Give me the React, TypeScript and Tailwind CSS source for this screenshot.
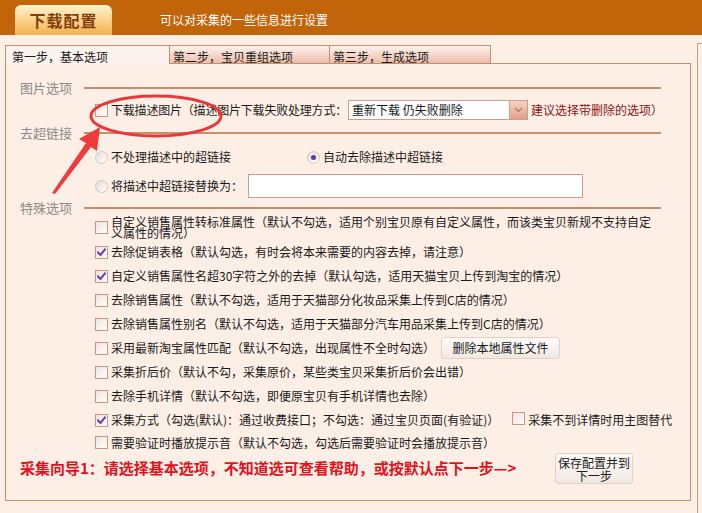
import React from "react";

function Checkbox({ checked = false }: { checked?: boolean }) {
  return (
    <span className="relative inline-flex items-center justify-center w-[13px] h-[13px] shrink-0 border border-[#c9977e] bg-gradient-to-br from-[#efe2de] to-white">
      {checked && (
        <svg width="9" height="9" viewBox="0 0 9 9" fill="none">
          <path d="M1 4.5 L3.5 7 L8 1.5" stroke="#6a3fa2" strokeWidth="2" strokeLinecap="square" />
        </svg>
      )}
    </span>
  );
}

function Radio({ checked = false }: { checked?: boolean }) {
  return (
    <span className="inline-flex items-center justify-center w-[13px] h-[13px] shrink-0 rounded-full border border-[#d3c6c0] bg-gradient-to-br from-[#e6ddd9] to-white">
      {checked && <span className="w-[5px] h-[5px] rounded-full bg-[#5b3aa3]" />}
    </span>
  );
}

function SectionLabel({ text, className = "" }: { text: string; className?: string }) {
  return (
    <div className={`flex items-center h-[16px] ${className}`}>
      <span className="text-[13px] leading-[16px] text-[#8a8a8a] whitespace-nowrap">{text}</span>
      <div className="flex-1 h-[2px] ml-[12px] bg-[#c4906e]" />
    </div>
  );
}

interface Opt {
  text: string;
  checked?: boolean;
}

const options: Opt[] = [
  { text: "去除促销表格（默认勾选，有时会将本来需要的内容去掉，请注意）", checked: true },
  { text: "自定义销售属性名超30字符之外的去掉（默认勾选，适用天猫宝贝上传到淘宝的情况）", checked: true },
  { text: "去除销售属性（默认不勾选，适用于天猫部分化妆品采集上传到C店的情况）" },
  { text: "去除销售属性别名（默认不勾选，适用于天猫部分汽车用品采集上传到C店的情况）" },
];

export default function App() {
  return (
    <div className="relative w-[702px] h-[513px] overflow-hidden bg-[#fdefe6] text-[#1a1a1a] font-['Noto_Sans_CJK_SC',sans-serif]">
      {/* header */}
      <div className="flex items-end h-[35px] pl-[15px] bg-[#c2650a]">
        <div className="flex items-center justify-center w-[97px] h-[30px] rounded-t-[6px] bg-gradient-to-b from-[#fff4cc] to-[#f2b047] text-[16px] font-bold tracking-[1px] text-[#853d0c]">
          下载配置
        </div>
        <div className="self-center mt-[5px] ml-[48px] text-[12px] text-white">可以对采集的一些信息进行设置</div>
      </div>

      <div className="flex h-[478px] pt-[8px] pl-[5px]">
        <div className="flex flex-col w-[686px] shrink-0 pt-[2px]">
          {/* tabs */}
          <div className="flex items-start h-[18px] text-[12px] whitespace-nowrap">
            <div className="relative z-10 w-[165px] h-[19px] pl-[6px] pt-[3px] leading-[15px] border-l border-t border-r border-[#c4906e] bg-[#fdf3ee]">
              第一步，基本选项
            </div>
            <div className="w-[160px] h-[18px] pl-[3px] pt-[3px] leading-[15px] border-t border-r border-[#c4906e] bg-gradient-to-b from-[#fdf2ec] to-[#ecbeac]">
              第二步，宝贝重组选项
            </div>
            <div className="w-[161px] h-[18px] pl-[3px] pt-[3px] leading-[15px] border-t border-r border-[#c4906e] bg-gradient-to-b from-[#fdf2ec] to-[#ecbeac]">
              第三步，生成选项
            </div>
          </div>

          {/* panel */}
          <div className="flex flex-col h-[438px] pl-[14px] pr-[29px] border border-[#c4906e] text-[12px] whitespace-nowrap">
            <SectionLabel text="图片选项" className="mt-[16px]" />
            <div className="flex items-center h-[20px] mt-[4px] pl-[75px]">
              <Checkbox />
              <span className="ml-[3px] tracking-[-0.2px]">下载描述图片（描述图片下载失败处理方式：</span>
              <div className="flex items-center w-[180px] h-[20px] shrink-0 ml-[1px] bg-white border border-[#c9a08c]">
                <span className="flex-1 pl-[3px] leading-[18px]">重新下载 仍失败删除</span>
                <span className="flex items-center justify-center w-[18px] h-full border-l border-[#d9a48c] bg-gradient-to-b from-[#f6d2c4] to-[#e2a088]">
                  <svg width="9" height="6" viewBox="0 0 9 6" fill="none">
                    <path d="M1 1 L4.5 4.5 L8 1" stroke="#b07860" strokeWidth="1.2" />
                  </svg>
                </span>
              </div>
              <span className="ml-[3px] text-[#8b1414]">建议选择带删除的选项）</span>
            </div>

            <SectionLabel text="去超链接" className="mt-[5px]" />
            <div className="flex items-center h-[20px] mt-[6px] pl-[75px]">
              <div className="flex items-center w-[212px] shrink-0">
                <Radio />
                <span className="ml-[3px]">不处理描述中的超链接</span>
              </div>
              <Radio checked />
              <span className="ml-[3px]">自动去除描述中超链接</span>
            </div>
            <div className="flex items-center h-[24px] mt-[7px] pl-[75px]">
              <Radio />
              <span className="ml-[3px]">将描述中超链接替换为：</span>
              <div className="w-[335px] h-[24px] shrink-0 ml-[5px] bg-white border border-[#c9a08c]" />
            </div>

            <SectionLabel text="特殊选项" className="mt-[2px]" />
            <div className="flex flex-col pl-[75px]">
              <div className="flex items-start h-[24px]">
                <span className="mt-[4px]">
                  <Checkbox />
                </span>
                <span className="ml-[3px] leading-[11px]">
                  自定义销售属性转标准属性（默认不勾选，适用个别宝贝原有自定义属性，而该类宝贝新规不支持自定
                  <br />
                  义属性的情况）
                </span>
              </div>
              {options.map((o) => (
                <div key={o.text} className="flex items-center h-[24px]">
                  <Checkbox checked={o.checked} />
                  <span className="ml-[3px]">{o.text}</span>
                </div>
              ))}
              <div className="flex items-center h-[24px]">
                <Checkbox />
                <span className="ml-[3px]">采用最新淘宝属性匹配（默认不勾选，出现属性不全时勾选）</span>
                <button className="w-[119px] h-[22px] shrink-0 ml-[6px] rounded-[3px] border border-[#ddd0ca] bg-gradient-to-b from-[#fdfaf8] to-[#f1e8e3] text-[12px]">
                  删除本地属性文件
                </button>
              </div>
              <div className="flex items-center h-[24px]">
                <Checkbox />
                <span className="ml-[3px]">采集折后价（默认不勾，采集原价，某些类宝贝采集折后价会出错）</span>
              </div>
              <div className="flex items-center h-[24px]">
                <Checkbox />
                <span className="ml-[3px]">去除手机详情（默认不勾选，即便原宝贝有手机详情也去除）</span>
              </div>
              <div className="flex items-center h-[24px]">
                <Checkbox checked />
                <span className="ml-[3px]">采集方式（勾选(默认)：通过收费接口；不勾选：通过宝贝页面(有验证)）</span>
                <span className="ml-[13px]">
                  <Checkbox />
                </span>
                <span className="ml-[3px]">采集不到详情时用主图替代</span>
              </div>
              <div className="flex items-center h-[21px]">
                <Checkbox />
                <span className="ml-[3px]">需要验证时播放提示音（默认不勾选，勾选后需要验证时会播放提示音）</span>
              </div>
            </div>

            <div className="flex items-center h-[31px]">
              <div className="w-[535px] shrink-0 text-[15px] font-bold text-[#e5101c]">
                采集向导1：请选择基本选项，不知道选可查看帮助，或按默认点下一步—&gt;
              </div>
              <button className="w-[78px] h-[31px] shrink-0 rounded-[3px] border border-[#ddd0ca] bg-gradient-to-b from-[#fdfaf8] to-[#f1e8e3] text-[12px] leading-[13px]">
                保存配置并到
                <br />
                下一步
              </button>
            </div>
          </div>
        </div>
        <div className="flex-1 ml-[6px] border-l border-t border-[#cf9f84]" />
      </div>

      {/* red annotation drawn over the form */}
      <svg className="absolute left-0 top-0 pointer-events-none" width="702" height="513" viewBox="0 0 702 513">
        <ellipse cx="156" cy="116" rx="65" ry="20" fill="none" stroke="#e8383c" strokeWidth="3" />
        <polygon points="100,127 79,139 86,143 52,193 55,194 91,147 97,151" fill="#ef3b3b" />
      </svg>
    </div>
  );
}
